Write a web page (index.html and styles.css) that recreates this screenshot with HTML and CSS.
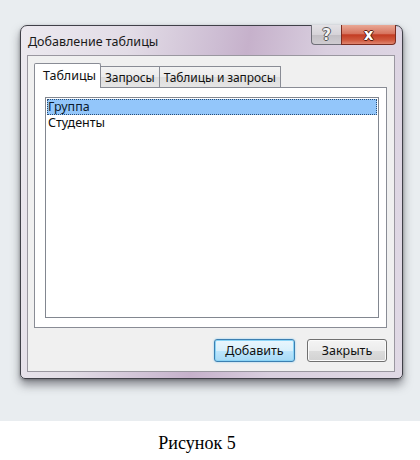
FILE: index.html
```html
<!DOCTYPE html>
<html lang="ru">
<head>
<meta charset="utf-8">
<link rel="stylesheet" href="styles.css">
</head>
<body>
<div class="stage">
  <div class="window">
    <div class="titlebar">
      <div class="title">Добавление таблицы</div>
      <div class="caption-buttons">
        <div class="cbtn help">?</div>
        <div class="cbtn close">x</div>
      </div>
    </div>
    <div class="client">
      <div class="tabs">
        <div class="tab active">Таблицы</div>
        <div class="tab">Запросы</div>
        <div class="tab">Таблицы и запросы</div>
      </div>
      <div class="panel">
        <div class="listbox">
          <div class="item selected">Группа</div>
          <div class="item">Студенты</div>
        </div>
      </div>
      <div class="buttons">
        <div class="btn default">Добавить</div>
        <div class="btn">Закрыть</div>
      </div>
    </div>
  </div>
</div>
<div class="caption">Рисунок 5</div>
</body>
</html>
```
FILE: styles.css
```css
html, body {
  margin: 0;
  padding: 0;
  background: #ffffff;
}
body {
  width: 420px;
  height: 460px;
  font-family: "Noto Sans", "Open Sans", sans-serif;
  font-size: 13px;
  color: #111;
}
.stage {
  height: 421px;
  box-sizing: border-box;
  padding: 25px 0 0 20px;
  background: #e9edf0;
}
.window {
  width: 383px;
  height: 354px;
  box-sizing: border-box;
  border: 1px solid #404048;
  border-radius: 7px 7px 5px 5px;
  background: linear-gradient(100deg, #ece9ef 0%, #e2dce6 25%, #cdbdd3 45%, #c6b1cb 52%, #d9cfdf 70%, #e0d9e5 100%);
  box-shadow: 0 6px 10px rgba(40, 40, 50, 0.5), 0 1px 3px rgba(0,0,0,0.3);
  display: flex;
  flex-direction: column;
}
.titlebar {
  height: 29px;
  display: flex;
  align-items: flex-start;
  padding-left: 7px;
}
.title {
  flex: 1;
  font-size: 12.5px;
  line-height: 16px;
  margin-top: 8px;
  color: #1a1a1a;
}
.caption-buttons {
  display: flex;
  margin-top: -1px;
  margin-right: 6px;
}
.cbtn {
  height: 20px;
  box-sizing: border-box;
  border: 1px solid #6f6f78;
  border-top: none;
  display: flex;
  align-items: center;
  justify-content: center;
  color: #ffffff;
  font-family: "DejaVu Sans", sans-serif;
  font-weight: bold;
}
.help {
  width: 30px;
  border-radius: 0 0 0 4px;
  border-right: none;
  background: linear-gradient(#e4e2e6, #d6d3d8 50%, #c2bfc4 51%, #cfccd1);
  font-size: 15px;
  color: #f4f4f4;
  text-shadow: 1px 0 0 #555, -1px 0 0 #555, 0 1px 0 #555, 0 -1px 0 #555;
}
.close {
  width: 55px;
  border-radius: 0 0 4px 0;
  border-color: #7a2c20;
  background: linear-gradient(#e9a895, #d7745f 45%, #c33c23 52%, #d05a3f 80%, #e08670);
  font-size: 15px;
  text-shadow: 1px 0 0 #5a1a0c, -1px 0 0 #5a1a0c, 0 1px 0 #5a1a0c, 0 -1px 0 #5a1a0c;
}
.client {
  flex: 1;
  margin: 0 7px 6px 6px;
  border: 1px solid #9a97a0;
  background: #f0f0f0;
  padding: 7px 7px 9px 6px;
  display: flex;
  flex-direction: column;
}
.tabs {
  height: 24px;
  display: flex;
  align-items: flex-end;
  position: relative;
  z-index: 1;
}
.tab {
  height: 21px;
  box-sizing: border-box;
  border: 1px solid #898c95;
  border-bottom: none;
  background: linear-gradient(#f3f3f3, #ebebeb 50%, #dedede 51%, #e5e5e5);
  padding: 0 4px;
  margin-left: -1px;
  display: flex;
  align-items: center;
  font-size: 12px;
  letter-spacing: -0.1px;
  color: #111;
}
.tab.active {
  height: 25px;
  margin-bottom: -1px;
  margin-left: 0;
  background: #ffffff;
  padding: 0 0 2px 8px;
  width: 67px;
  font-size: 12.5px;
  letter-spacing: 0;
  border-radius: 2px 2px 0 0;
}
.panel {
  height: 241px;
  box-sizing: border-box;
  border: 1px solid #898c95;
  background: #ffffff;
  padding: 9px 7px 9px 10px;
  display: flex;
  flex-direction: column;
}
.listbox {
  flex: 1;
  border: 1px solid #828790;
  background: #fff;
  padding: 1px;
}
.item {
  height: 16px;
  line-height: 16px;
  padding-left: 1px;
  box-sizing: border-box;
  font-size: 12.5px;
  color: #0d0d0d;
}
.item.selected {
  background: #93c6fa;
  outline: 1px dotted #2a4d75;
  outline-offset: -1px;
  color: #0b1a2c;
}
.buttons {
  margin-top: 11px;
  display: flex;
  justify-content: flex-end;
  gap: 12px;
}
.btn {
  width: 80px;
  height: 23px;
  box-sizing: border-box;
  border: 1px solid #707070;
  border-radius: 3px;
  background: linear-gradient(#f4f4f4, #ececec 50%, #dcdcdc 51%, #d2d2d2);
  display: flex;
  align-items: center;
  justify-content: center;
  font-size: 12.5px;
  color: #111;
  box-shadow: inset 0 0 0 1px #fbfbfb;
}
.btn.default {
  width: 81px;
  border-color: #3c7fb1;
  background: linear-gradient(#eaf6fd, #d9f0fc 50%, #bee6fd 51%, #a7d9f5);
  box-shadow: inset 0 0 0 1px #8bd4f6, 0 0 2px #7ec9ef;
}
.caption {
  height: 39px;
  box-sizing: border-box;
  padding: 5px 26px 0 0;
  display: flex;
  align-items: center;
  justify-content: center;
  font-family: "Liberation Serif", serif;
  font-size: 18px;
  color: #000;
}
```
